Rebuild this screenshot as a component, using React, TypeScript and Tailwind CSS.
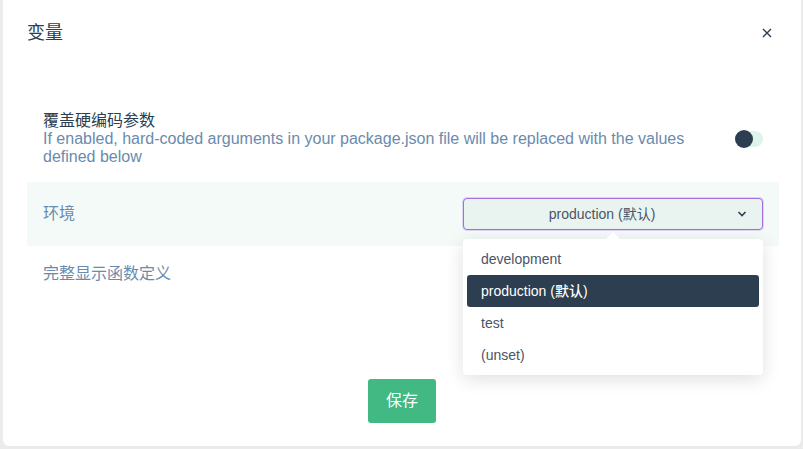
import React from 'react';

const font = { fontFamily: '"Liberation Sans", Arial, "Noto Sans CJK SC", sans-serif' };

const options = ['development', 'production (默认)', 'test', '(unset)'];

const Toggle: React.FC = () => (
  <div className="relative h-[16px] w-[28px] shrink-0 rounded-full bg-[#dff3ed]">
    <div className="absolute left-0 top-[-1px] h-[18px] w-[18px] rounded-full bg-[#2c3e50]" />
  </div>
);

const SelectBox: React.FC = () => (
  <div className="relative w-[300px] shrink-0">
    <div className="flex h-[32px] items-center rounded-[4px] border border-[#a56de2] bg-[#e9f4f1] pl-3 pr-[34px] shadow-[0_0_0_1px_rgba(165,109,226,0.25)]">
      <span className="flex-1 text-center text-[14px] text-[#4a5568]">production (默认)</span>
      <svg width="10" height="6" viewBox="0 0 10 6" className="absolute right-[16px] top-[13px]">
        <polyline points="1.5,1 5,4.5 8.5,1" fill="none" stroke="#2c3e50" strokeWidth="1.6" />
      </svg>
    </div>

    {/* dropdown */}
    <div className="absolute left-0 top-[41px] z-10 w-[300px] rounded-[4px] bg-white p-1 shadow-[0_4px_18px_rgba(0,0,0,0.13)]">
      <div className="absolute left-[145px] top-[-5px] h-[10px] w-[10px] rotate-45 bg-white" />
      {options.map((o, i) => (
        <div
          key={o}
          className={
            i === 1
              ? 'relative flex h-[32px] items-center rounded-[3px] bg-[#2c3e50] px-[14px] text-[14px] font-medium text-white'
              : 'relative flex h-[32px] items-center px-[14px] text-[14px] text-[#4a5568]'
          }
        >
          {o}
        </div>
      ))}
    </div>
  </div>
);

export default function App() {
  return (
    <div className="h-[449px] w-[803px] overflow-hidden bg-[#ebebeb]" style={font}>
      <div className="ml-[3px] flex h-[446px] w-[798px] flex-col rounded-b-[6px] bg-white">
        {/* header */}
        <div className="flex h-[66px] items-center justify-between px-6">
          <h2 className="text-[18px] text-[#2c3e50]">变量</h2>
          <svg width="10" height="10" viewBox="0 0 10 10" className="mr-[5px]">
            <path d="M1 1 L9 9 M9 1 L1 9" stroke="#2c3e50" strokeWidth="1.4" />
          </svg>
        </div>

        {/* body */}
        <div className="flex flex-col pl-6 pr-[22px] pt-[30px]">
          <div className="flex items-center gap-5 p-4">
            <div className="flex-1 text-[16px] leading-[18px]">
              <div className="text-[#2c3e50]">覆盖硬编码参数</div>
              <div className="text-[#6a8bad]">
                If enabled, hard-coded arguments in your package.json file will be replaced with the values defined below
              </div>
            </div>
            <Toggle />
          </div>

          <div className="flex items-center justify-between bg-[#f3faf8] px-4 py-4">
            <span className="text-[16px] text-[#6a8bad]">环境</span>
            <SelectBox />
          </div>

          <div className="px-4 py-4">
            <span className="text-[16px] leading-[22px] text-[#6a8bad]">完整显示函数定义</span>
          </div>
        </div>

        {/* footer */}
        <div className="mt-[77px] flex justify-center">
          <button className="h-[44px] rounded-[3px] bg-[#42b883] px-[18px] text-[16px] text-white">保存</button>
        </div>
      </div>
    </div>
  );
}
